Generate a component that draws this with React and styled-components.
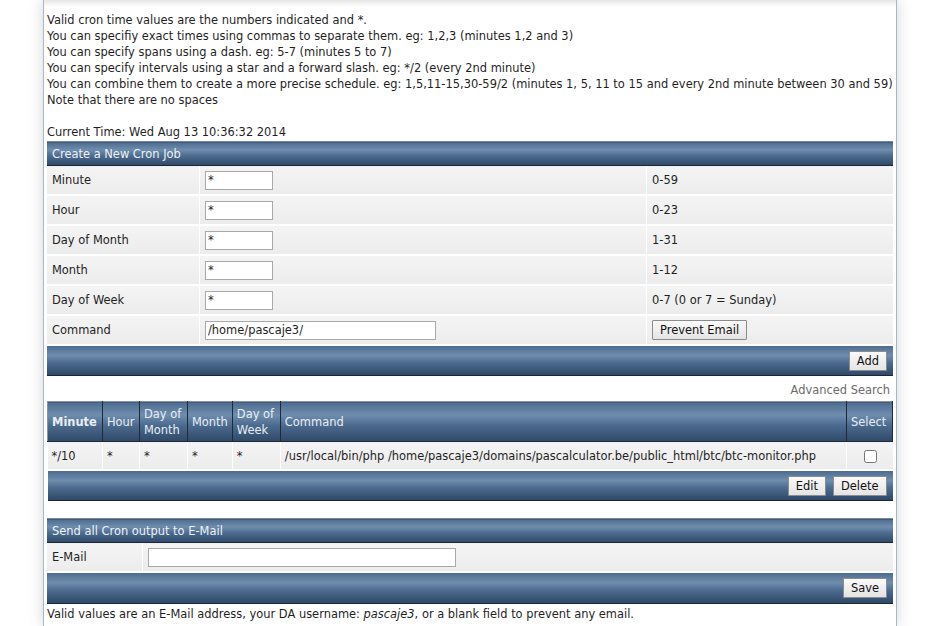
import React from 'react'
import styled, { createGlobalStyle } from 'styled-components'

const GlobalStyle = createGlobalStyle`
    body {
        margin: 0;
        background: #fff;
        font-family: "DejaVu Sans", Verdana, sans-serif;
        font-size: 11.45px;
        color: #1f1f1f;
    }
`

const bar = `linear-gradient(to bottom, #4d6c90 0%, #6f8dad 32%, #4d6b8f 58%, #2e4968 100%)`

const Page = styled.div`
    display: flex;
    min-height: 626px;
`

const Panel = styled.main`
    margin-left: 43px;
    width: 846px;
    padding: 12px 3px 0 3px;
    border-left: 1px solid #aab7c6;
    border-right: 1px solid #aab7c6;
    background: linear-gradient(to bottom, #e6e6e6 0, #fff 7px);
    box-shadow: 0 0 14px rgba(0, 0, 0, 0.17);
`

const Intro = styled.div`
    line-height: 16px;
    white-space: nowrap;
    p { margin: 0; }
    .gap { height: 16px; }
    .time { margin-bottom: 1px; }
`

const Table = styled.table`
    width: 846px;
    border-collapse: collapse;
    margin-bottom: ${p => p.$gap || 0}px;
    td, th { font-size: 11.45px; }
`

const Title = styled.th`
    background: ${bar};
    color: #eef2f7;
    font-weight: normal;
    text-align: left;
    height: 23px;
    padding: 0 5px;
    border-top: 1px solid #7a8796;
    border-bottom: 1px solid #1d2733;
`

const ColHead = styled.th`
    box-sizing: border-box;
    background: ${bar};
    color: #e9eef4;
    font-weight: ${p => (p.$sorted ? 'bold' : 'normal')};
    text-align: left;
    line-height: 16px;
    height: 40px;
    padding: 0 4px;
    width: ${p => (p.$w ? `${p.$w}px` : 'auto')};
    border: 1px solid #8a939e;
    border-right-color: #1f2a36;
    border-bottom-color: #1f2a36;
`

const Cell = styled.td`
    background: linear-gradient(to bottom, #f4f4f4, #ececec);
    height: ${p => p.$h || 28}px;
    padding: 0 ${p => p.$pad ?? 5}px;
    border-right: 1px solid #fff;
    border-bottom: 2px solid #fff;
    width: ${p => (p.$w ? `${p.$w}px` : 'auto')};
    text-align: ${p => p.$align || 'left'};
    vertical-align: middle;
    white-space: nowrap;
    &:last-child { border-right: none; }
`

const BarCell = styled.td`
    background: ${bar};
    height: ${p => p.$h || 29}px;
    padding: 0 6px;
    text-align: right;
    border-bottom: 1px solid #1d2733;
    button + button { margin-left: 7px; }
`

const TextInput = styled.input`
    width: ${p => p.$w}px;
    height: 19px;
    box-sizing: border-box;
    padding: 0 2px;
    border: 1px solid #a8a8a8;
    background: #fff;
    font-family: "DejaVu Sans", Verdana, sans-serif;
    font-size: 11.45px;
    color: #1f1f1f;
    outline: none;
`

const Button = styled.button`
    height: 20px;
    padding: 0 7px;
    border: 1px solid #8c8c8c;
    border-radius: 1px;
    background: linear-gradient(to bottom, #fafafa, #e4e4e4);
    font-family: "DejaVu Sans", Verdana, sans-serif;
    font-size: 11.45px;
    color: #111;
    vertical-align: middle;
`

const SearchLink = styled.div`
    text-align: right;
    color: #6b6b6b;
    line-height: 16px;
    padding: 6px 3px 3px 0;
`

const Check = styled.input`
    width: 13px;
    height: 13px;
    margin: 0 0 0 2px;
    vertical-align: middle;
`

const Note = styled.p`
    margin: 0;
    padding-top: 2px;
    line-height: 16px;
    em { font-style: italic; }
`

const fields = [
    { label: 'Minute', range: '0-59' },
    { label: 'Hour', range: '0-23' },
    { label: 'Day of Month', range: '1-31' },
    { label: 'Month', range: '1-12' },
    { label: 'Day of Week', range: '0-7 (0 or 7 = Sunday)' },
]

const columns = [
    { label: 'Minute', w: 55, sorted: true },
    { label: 'Hour', w: 37 },
    { label: <>Day of<br />Month</>, w: 48 },
    { label: 'Month', w: 44 },
    { label: <>Day of<br />Week</>, w: 48 },
    { label: 'Command' },
    { label: 'Select', w: 46 },
]

const job = ['*/10', '*', '*', '*', '*', '/usr/local/bin/php /home/pascaje3/domains/pascalculator.be/public_html/btc/btc-monitor.php']

const App = () => {
    return (
        <Page>
            <GlobalStyle />
            <Panel>
                <Intro>
                    <p>Valid cron time values are the numbers indicated and *.</p>
                    <p>You can specifiy exact times using commas to separate them. eg: 1,2,3 (minutes 1,2 and 3)</p>
                    <p>You can specify spans using a dash. eg: 5-7 (minutes 5 to 7)</p>
                    <p>You can specify intervals using a star and a forward slash. eg: */2 (every 2nd minute)</p>
                    <p>You can combine them to create a more precise schedule. eg: 1,5,11-15,30-59/2 (minutes 1, 5, 11 to 15 and every 2nd minute between 30 and 59)</p>
                    <p>Note that there are no spaces</p>
                    <div className="gap" />
                    <p className="time">Current Time: Wed Aug 13 10:36:32 2014</p>
                </Intro>

                <Table>
                    <thead>
                        <tr><Title colSpan={3}>Create a New Cron Job</Title></tr>
                    </thead>
                    <tbody>
                        {fields.map(f => (
                            <tr key={f.label}>
                                <Cell $w={142}>{f.label}</Cell>
                                <Cell $w={436}><TextInput $w={68} defaultValue="*" /></Cell>
                                <Cell>{f.range}</Cell>
                            </tr>
                        ))}
                        <tr>
                            <Cell>Command</Cell>
                            <Cell><TextInput $w={231} defaultValue="/home/pascaje3/" /></Cell>
                            <Cell><Button>Prevent Email</Button></Cell>
                        </tr>
                        <tr><BarCell colSpan={3}><Button>Add</Button></BarCell></tr>
                    </tbody>
                </Table>

                <SearchLink>Advanced Search</SearchLink>

                <Table $gap={17}>
                    <thead>
                        <tr>
                            {columns.map((c, i) => (
                                <ColHead key={i} $w={c.w} $sorted={c.sorted}>{c.label}</ColHead>
                            ))}
                        </tr>
                    </thead>
                    <tbody>
                        <tr>
                            {job.map((v, i) => <Cell key={i} $pad={4} $h={27}>{v}</Cell>)}
                            <Cell $align="center" $h={27}><Check type="checkbox" /></Cell>
                        </tr>
                        <tr>
                            <BarCell colSpan={7}><Button>Edit</Button><Button>Delete</Button></BarCell>
                        </tr>
                    </tbody>
                </Table>

                <Table>
                    <thead>
                        <tr><Title colSpan={2}>Send all Cron output to E-Mail</Title></tr>
                    </thead>
                    <tbody>
                        <tr>
                            <Cell $w={85}>E-Mail</Cell>
                            <Cell><TextInput $w={308} /></Cell>
                        </tr>
                        <tr><BarCell colSpan={2} $h={30}><Button>Save</Button></BarCell></tr>
                    </tbody>
                </Table>
                <Note>Valid values are an E-Mail address, your DA username: <em>pascaje3</em>, or a blank field to prevent any email.</Note>
            </Panel>
        </Page>
    )
}

export default App
